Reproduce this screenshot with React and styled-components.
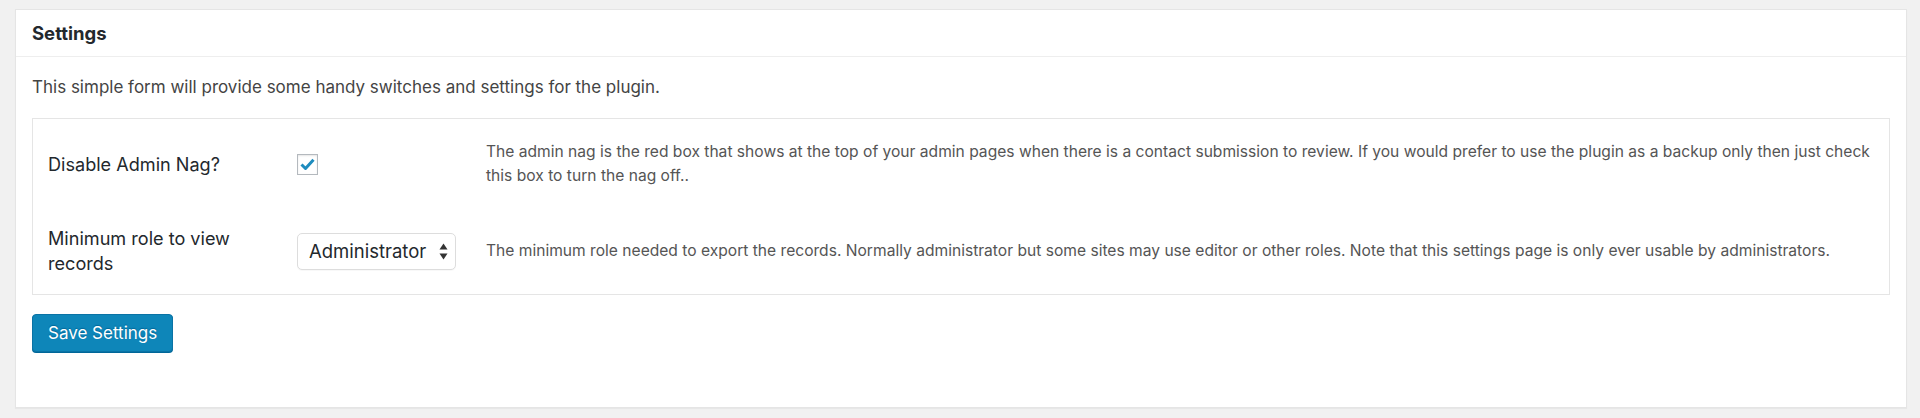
import React from 'react';
import styled, { createGlobalStyle } from 'styled-components';

const GlobalStyle = createGlobalStyle`
  html, body {
    margin: 0;
    padding: 0;
    background: #f1f1f1;
  }
  body {
    font-family: Inter, "Liberation Sans", Arial, sans-serif;
    color: #444;
  }
`;

const Page = styled.div`
  padding: 9px 13px 10px 15px;
  min-height: 418px;
  box-sizing: border-box;
`;

const Card = styled.div`
  background: #fff;
  border: 1px solid #e5e5e5;
  box-shadow: 0 1px 1px rgba(0, 0, 0, 0.04);
`;

const CardHeader = styled.div`
  height: 46px;
  padding: 0 16px;
  display: flex;
  align-items: center;
  border-bottom: 1px solid #eee;
`;

const Title = styled.h2`
  margin: 0;
  font-size: 18.5px;
  font-weight: 700;
  color: #23282d;
`;

const CardBody = styled.div`
  padding: 18px 16px 55px;
`;

const Intro = styled.p`
  margin: 0 0 19px;
  font-size: 17px;
  line-height: 24px;
  color: #444;
`;

const FormTable = styled.div`
  border: 1px solid #e5e5e5;
`;

const Row = styled.div`
  display: grid;
  grid-template-columns: 249px 189px 1fr;
  align-items: center;
  padding: ${(p) => p.$pad};
`;

const Label = styled.div`
  padding-right: 15px;
  font-size: 18.1px;
  line-height: 25px;
  color: #23282d;
`;

const Field = styled.div`
  display: flex;
  align-items: center;
`;

const Description = styled.p`
  margin: 0;
  font-size: 15.6px;
  line-height: 24px;
  color: #555;
`;

const CheckBox = styled.span`
  width: 19px;
  height: 19px;
  border: 1px solid #b4b9be;
  background: #fff;
  box-shadow: inset 0 1px 2px rgba(0, 0, 0, 0.1);
  display: flex;
  align-items: center;
  justify-content: center;
`;

const Select = styled.div`
  width: 159px;
  height: 37px;
  box-sizing: border-box;
  border: 1px solid #ddd;
  border-radius: 5px;
  background: #fff;
  box-shadow: 0 1px 1px rgba(0, 0, 0, 0.03);
  padding: 0 7px 0 11px;
  display: flex;
  align-items: center;
  justify-content: space-between;
  font-size: 18.5px;
  color: #23282d;
`;

const Button = styled.button`
  margin-top: 19px;
  height: 38px;
  padding: 0 15px;
  background: #0e86b9;
  border: 1px solid #0a73a5;
  border-radius: 4px;
  box-shadow: 0 1px 0 #006799;
  color: #fff;
  font-family: inherit;
  font-size: 17px;
  text-shadow: 0 -1px 1px #006799;
  cursor: pointer;
`;

const CheckMark = () => (
  <svg width="15" height="13" viewBox="0 0 15 13">
    <path d="M1.5 6.5 L5.5 10.5 L13.5 1.8" fill="none" stroke="#1e8cbe" strokeWidth="3" strokeLinejoin="round" />
  </svg>
);

const UpDown = () => (
  <svg width="9" height="17" viewBox="0 0 9 17">
    <path d="M4.5 0.5 L8.5 6.5 L0.5 6.5 Z" fill="#333" />
    <path d="M4.5 16.5 L8.5 10.5 L0.5 10.5 Z" fill="#333" />
  </svg>
);

export default function App() {
  return (
    <>
      <GlobalStyle />
      <Page>
        <Card>
          <CardHeader>
            <Title>Settings</Title>
          </CardHeader>
          <CardBody>
            <Intro>This simple form will provide some handy switches and settings for the plugin.</Intro>
            <FormTable>
              <Row $pad="21px 6px 21px 15px">
                <Label>Disable Admin Nag?</Label>
                <Field>
                  <CheckBox>
                    <CheckMark />
                  </CheckBox>
                </Field>
                <Description>
                  The admin nag is the red box that shows at the top of your admin pages when there is a contact submission to review. If you would prefer to use the plugin as a backup only then just check this box to turn the nag off..
                </Description>
              </Row>
              <Row $pad="17px 6px 18px 15px">
                <Label>Minimum role to view records</Label>
                <Field>
                  <Select>
                    <span>Administrator</span>
                    <UpDown />
                  </Select>
                </Field>
                <Description>
                  The minimum role needed to export the records. Normally administrator but some sites may use editor or other roles. Note that this settings page is only ever usable by administrators.
                </Description>
              </Row>
            </FormTable>
            <Button>Save Settings</Button>
          </CardBody>
        </Card>
      </Page>
    </>
  );
}
